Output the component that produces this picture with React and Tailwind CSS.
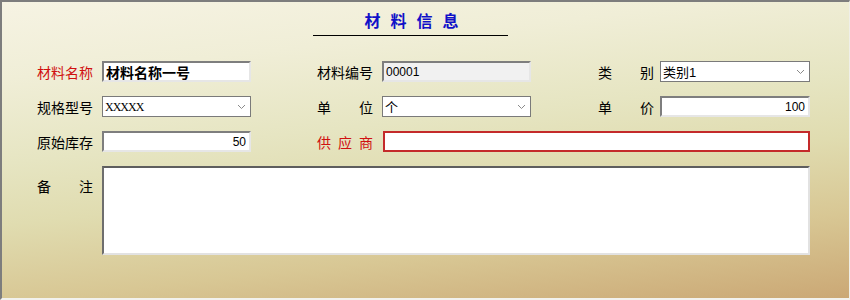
// App.jsx — 材料信息 form, old Windows look on a cream-to-tan panel
const cjk = { fontFamily: '"Noto Sans CJK SC", "Liberation Sans", sans-serif' }

// label text spread over a fixed width, like "单    位"
function Label({ text, red }) {
  return (
    <div
      className={`flex w-[56px] justify-between text-[14px] leading-[20px] ${red ? 'text-[#d01010]' : 'text-black'}`}
      style={cjk}
    >
      {text.split('').map((ch, i) => (
        <span key={i}>{ch}</span>
      ))}
    </div>
  )
}

function Chevron() {
  return (
    <svg width="9" height="6" viewBox="0 0 9 6" className="mr-[4px] shrink-0">
      <polyline points="1,1 4.5,4.5 8,1" fill="none" stroke="#8a8a8a" strokeWidth="1" />
    </svg>
  )
}

// sunken edit box
function Edit({ children, right, gray, className = '' }) {
  return (
    <div
      className={`flex h-[21px] items-center border-2 border-t-[#7e7e7e] border-l-[#7e7e7e] border-b-[#e6e6e6] border-r-[#e6e6e6] px-[2px] ${right ? 'justify-end' : ''} ${gray ? 'bg-[#f1f1f1]' : 'bg-white'} ${className}`}
    >
      {children}
    </div>
  )
}

// flat combo box
function Combo({ children }) {
  return (
    <div className="flex h-[21px] items-center justify-between border border-[#7a7a7a] bg-white pl-[2px]">
      {children}
      <Chevron />
    </div>
  )
}

export default function App() {
  return (
    <div className="h-[300px] w-[850px] overflow-hidden border-t-2 border-l-2 border-b-2 border-r border-t-[#7d7d7d] border-l-[#7d7d7d] border-b-[#f2f2ee] border-r-[#efefe8] bg-[linear-gradient(174deg,#f6f3e3_0%,#f0eed7_20%,#e6e5c2_42%,#e0dcb0_58%,#d8c794_78%,#cba875_100%)]">
      {/* title */}
      <div className="ml-[311px] mt-[7px] w-[195px] border-b border-black pb-[2px] text-center">
        <span
          className="pl-[12px] text-[16px] font-bold leading-[22px] tracking-[10px] text-[#1010c8]"
          style={cjk}
        >
          材料信息
        </span>
      </div>

      {/* form */}
      <div className="mt-[25px] grid grid-cols-[65px_149px_131px_149px_129px_150px] grid-rows-[21px_21px_21px_89px] gap-y-[14px] pl-[35px]">
        {/* row 1 */}
        <div className="flex items-center">
          <Label text="材料名称" red />
        </div>
        <Edit>
          <span className="text-[14px] font-bold leading-none text-black" style={cjk}>
            材料名称一号
          </span>
        </Edit>
        <div className="flex items-center justify-end pr-[9px]">
          <Label text="材料编号" />
        </div>
        <Edit gray>
          <span className="font-['Liberation_Sans'] text-[12px] text-black">00001</span>
        </Edit>
        <div className="flex items-center justify-end pr-[6px]">
          <Label text="类别" />
        </div>
        <Combo>
          <span className="text-[13px] leading-none text-black" style={cjk}>
            类别<span className="font-['Liberation_Sans']">1</span>
          </span>
        </Combo>

        {/* row 2 */}
        <div className="flex items-center">
          <Label text="规格型号" />
        </div>
        <Combo>
          <span className="font-['Liberation_Serif'] text-[12px] tracking-[-1px] text-black">XXXXX</span>
        </Combo>
        <div className="flex items-center justify-end pr-[9px]">
          <Label text="单位" />
        </div>
        <Combo>
          <span className="text-[13px] leading-none text-black" style={cjk}>
            个
          </span>
        </Combo>
        <div className="flex items-center justify-end pr-[6px]">
          <Label text="单价" />
        </div>
        <Edit right>
          <span className="pr-[1px] font-['Liberation_Sans'] text-[12px] text-black">100</span>
        </Edit>

        {/* row 3 */}
        <div className="flex items-center">
          <Label text="原始库存" />
        </div>
        <Edit right>
          <span className="pr-[1px] font-['Liberation_Sans'] text-[12px] text-black">50</span>
        </Edit>
        <div className="flex items-center justify-end pr-[9px]">
          <Label text="供应商" red />
        </div>
        <div className="col-span-3 ml-[1px] h-[21px] border-2 border-[#c42a2a] bg-white" />

        {/* remarks */}
        <div className="pt-[10px]">
          <Label text="备注" />
        </div>
        <div className="col-span-5 border-2 border-t-[#5e5e5e] border-l-[#6e6e6e] border-b-[#e2e2e2] border-r-[#e2e2e2] bg-white" />
      </div>
    </div>
  )
}
